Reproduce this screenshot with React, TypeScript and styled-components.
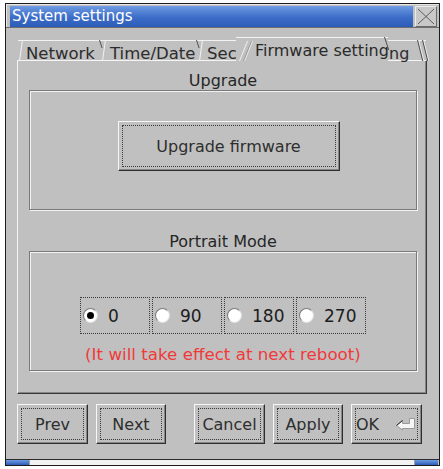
import React from 'react';
import styled, { createGlobalStyle } from 'styled-components';

const Global = createGlobalStyle`
  html, body { margin: 0; padding: 0; background: #ffffff; }
  body { font-family: "DejaVu Sans", "Liberation Sans", sans-serif; }
  * { box-sizing: border-box; }
`;

const Window = styled.div`
  margin: 3px 0 0 5px;
  width: 435px;
  border: 1px solid #1c1c1c;
  background: #c0c0c0;
`;

const TitleRow = styled.div`
  display: flex;
  gap: 2px;
  height: 24px;
  padding: 2px 2px 0 4px;
  border-bottom: 1px solid #6e6e6e;
  box-shadow: inset 1px 1px 0 #e6e6e6;
`;

const TitleBar = styled.div`
  flex: 1;
  height: 21px;
  background: linear-gradient(#6f9be2, #3b6cc8 55%, #2c5cb8);
  color: #ffffff;
  font-size: 15px;
  line-height: 21px;
  padding-left: 2px;
  white-space: nowrap;
`;

const CloseButton = styled.div`
  width: 22px;
  height: 21px;
  border: 1px solid;
  border-color: #ececec #6a6a6a #6a6a6a #ececec;
  background: #c8c8c8;
  display: flex;
  align-items: center;
  justify-content: center;
`;

const Body = styled.div`
  padding: 9px 12px 15px 11px;
  border-bottom: 1px solid #2a2a2a;
`;

const TabBar = styled.div`
  position: relative;
  z-index: 1;
  display: flex;
  align-items: flex-end;
  height: 24px;
  margin-bottom: -1px;
  padding-left: 1px;
`;

const Tab = styled.div<{ $w: number; $pl: number; $clip?: boolean }>`
  position: relative;
  flex: none;
  width: ${(p) => p.$w}px;
  height: 21px;
  padding: 3px 0 0 ${(p) => p.$pl}px;
  border-top: 1px solid #f2f2f2;
  font-size: 16.5px;
  line-height: 20px;
  color: #2c2c2c;
  white-space: nowrap;
  overflow: ${(p) => (p.$clip ? 'hidden' : 'visible')};
  &::before {
    content: '';
    position: absolute;
    left: 1px;
    top: -1px;
    bottom: 0;
    width: 1px;
    background: #f2f2f2;
    transform-origin: bottom left;
    transform: skewX(-8deg);
  }
  &::after {
    content: '';
    position: absolute;
    right: 1px;
    top: -1px;
    height: 8px;
    width: 1px;
    background: #4e4e4e;
    transform-origin: top left;
    transform: skewX(18deg);
  }
`;

const ActiveTab = styled.div`
  position: relative;
  z-index: 2;
  flex: none;
  width: 152px;
  height: 24px;
  margin-left: -10px;
  padding: 3px 0 0 19px;
  border-top: 1px solid #f4f4f4;
  background: #c0c0c0;
  font-size: 16px;
  line-height: 20px;
  color: #2a2a2a;
  white-space: nowrap;
  &::before {
    content: '';
    position: absolute;
    left: 3px;
    top: 3px;
    bottom: 0;
    width: 1px;
    background: #f0f0f0;
    box-shadow: 4px 0 0 #9a9a9a, 5px 0 0 #f0f0f0;
    transform-origin: bottom left;
    transform: skewX(-22deg);
  }
  &::after {
    content: '';
    position: absolute;
    right: 3px;
    top: -1px;
    height: 13px;
    width: 1px;
    background: #4e4e4e;
    transform-origin: top left;
    transform: skewX(18deg);
  }
`;

const EdgeTab = styled.div`
  position: relative;
  z-index: 3;
  flex: none;
  width: 38px;
  height: 21px;
  padding: 3px 0 0 1px;
  border-top: 1px solid #f2f2f2;
  font-size: 16px;
  line-height: 20px;
  color: #2c2c2c;
  white-space: nowrap;
  &::after {
    content: '';
    position: absolute;
    right: 8px;
    top: -1px;
    height: 21px;
    width: 1px;
    background: #4e4e4e;
    box-shadow: 1px 0 0 #f2f2f2, 5px 0 0 #4e4e4e, 6px 0 0 #f2f2f2;
    transform-origin: top left;
    transform: skewX(14deg);
  }
`;

const Panel = styled.div`
  width: 410px;
  height: 334px;
  border: 1px solid;
  border-color: #f4f4f4 #3a3a3a #3a3a3a #f4f4f4;
  box-shadow: inset -1px -1px 0 #858585;
  padding: 11px 9px 0 11px;
  display: flex;
  flex-direction: column;
`;

const GroupTitle = styled.div<{ $mt?: number }>`
  margin-top: ${(p) => p.$mt ?? 0}px;
  height: 18px;
  line-height: 18px;
  font-size: 16px;
  color: #262626;
  text-align: center;
`;

const GroupBox = styled.div<{ $pt: number; $pl?: number }>`
  height: 120px;
  border: 1px solid #7a7a7a;
  box-shadow: inset 1px 1px 0 #f2f2f2, 1px 1px 0 #f2f2f2;
  padding-top: ${(p) => p.$pt}px;
  padding-left: ${(p) => p.$pl ?? 0}px;
  display: flex;
  flex-direction: column;
  align-items: center;
`;

const PushButton = styled.button<{ $w: number; $h: number }>`
  flex: none;
  width: ${(p) => p.$w}px;
  height: ${(p) => p.$h}px;
  margin: 0;
  padding: 3px;
  border: 1px solid;
  border-color: #f6f6f6 #2e2e2e #2e2e2e #f6f6f6;
  box-shadow: inset -1px -1px 0 #868686;
  background: #c0c0c0;
  font-family: inherit;
  font-size: 16px;
  color: #2e2e2e;
  display: flex;
`;

const FocusFrame = styled.span`
  flex: 1;
  border: 1px dotted #3a3a3a;
  display: flex;
  align-items: center;
  justify-content: center;
  gap: 16px;
`;

const RadioRow = styled.div`
  display: flex;
  gap: 2px;
`;

const RadioOption = styled.div`
  width: 70px;
  height: 37px;
  border: 1px dotted #3a3a3a;
  display: flex;
  align-items: center;
  padding-left: 2px;
  gap: 10px;
  font-size: 17px;
  color: #1c1c1c;
`;

const RadioDot = styled.span<{ $on: boolean }>`
  flex: none;
  width: 15px;
  height: 15px;
  border-radius: 50%;
  background: #ffffff;
  border: 1px solid;
  border-color: #7a7a7a #dedede #dedede #7a7a7a;
  display: flex;
  align-items: center;
  justify-content: center;
  &::after {
    content: '';
    width: 7px;
    height: 7px;
    border-radius: 50%;
    background: ${(p) => (p.$on ? '#000000' : 'transparent')};
  }
`;

const Note = styled.div`
  margin-top: 11px;
  line-height: 18px;
  font-size: 16.7px;
  color: #f03a3a;
  white-space: nowrap;
`;

const ButtonRow = styled.div`
  display: flex;
  gap: 8px;
  margin-top: 10px;
`;

const Spacer = styled.div`
  width: 12px;
  flex: none;
`;

const Strip = styled.div`
  display: grid;
  grid-template-columns: 23px 1fr 23px;
  height: 5px;
  padding-right: 1px;
`;

const StripEnd = styled.div`
  background: linear-gradient(#6f9be2, #2c5cb8);
`;

const StripMid = styled.div`
  background: #f2f2f2;
  border-left: 1px solid #a0a0a0;
  border-right: 1px solid #a0a0a0;
`;

const ReturnIcon = () => (
  <svg width="22" height="14" viewBox="0 0 22 14">
    <path
      d="M1.5 8.5 L7.5 3.5 L7.5 6.5 L14.5 6.5 L14.5 1.5 L19.5 1.5 L19.5 11.5 L7.5 11.5 L7.5 13 Z"
      fill="#f6f6f6"
      stroke="#9a9a9a"
      strokeWidth="1"
    />
    <path d="M1.5 8.5 L7.5 3.5" stroke="#202020" strokeWidth="1" fill="none" />
  </svg>
);

const CloseIcon = () => (
  <svg width="18" height="17" viewBox="0 0 18 17">
    <path d="M1 1 L17 16 M17 1 L1 16" stroke="#5e5e5e" strokeWidth="1" fill="none" />
  </svg>
);

const radios = ['0', '90', '180', '270'];

export default function App() {
  return (
    <>
      <Global />
      <Window>
        <TitleRow>
          <TitleBar>System settings</TitleBar>
          <CloseButton>
            <CloseIcon />
          </CloseButton>
        </TitleRow>
        <Body>
          <TabBar>
            <Tab $w={83} $pl={8}>Network</Tab>
            <Tab $w={97} $pl={9}>Time/Date</Tab>
            <Tab $w={48} $pl={9} $clip>Security</Tab>
            <ActiveTab>Firmware setting</ActiveTab>
            <EdgeTab>ng</EdgeTab>
          </TabBar>
          <Panel>
            <GroupTitle>Upgrade</GroupTitle>
            <GroupBox $pt={30} $pl={11}>
              <PushButton $w={222} $h={50}>
                <FocusFrame>Upgrade firmware</FocusFrame>
              </PushButton>
            </GroupBox>
            <GroupTitle $mt={23}>Portrait Mode</GroupTitle>
            <GroupBox $pt={45}>
              <RadioRow>
                {radios.map((r, i) => (
                  <RadioOption key={r}>
                    <RadioDot $on={i === 0} />
                    {r}
                  </RadioOption>
                ))}
              </RadioRow>
              <Note>(It will take effect at next reboot)</Note>
            </GroupBox>
          </Panel>
          <ButtonRow>
            <PushButton $w={71} $h={40}>
              <FocusFrame>Prev</FocusFrame>
            </PushButton>
            <PushButton $w={70} $h={40}>
              <FocusFrame>Next</FocusFrame>
            </PushButton>
            <Spacer />
            <PushButton $w={71} $h={40}>
              <FocusFrame>Cancel</FocusFrame>
            </PushButton>
            <PushButton $w={70} $h={40}>
              <FocusFrame>Apply</FocusFrame>
            </PushButton>
            <PushButton $w={71} $h={40}>
              <FocusFrame>
                OK
                <ReturnIcon />
              </FocusFrame>
            </PushButton>
          </ButtonRow>
        </Body>
        <Strip>
          <StripEnd />
          <StripMid />
          <StripEnd />
        </Strip>
      </Window>
    </>
  );
}
